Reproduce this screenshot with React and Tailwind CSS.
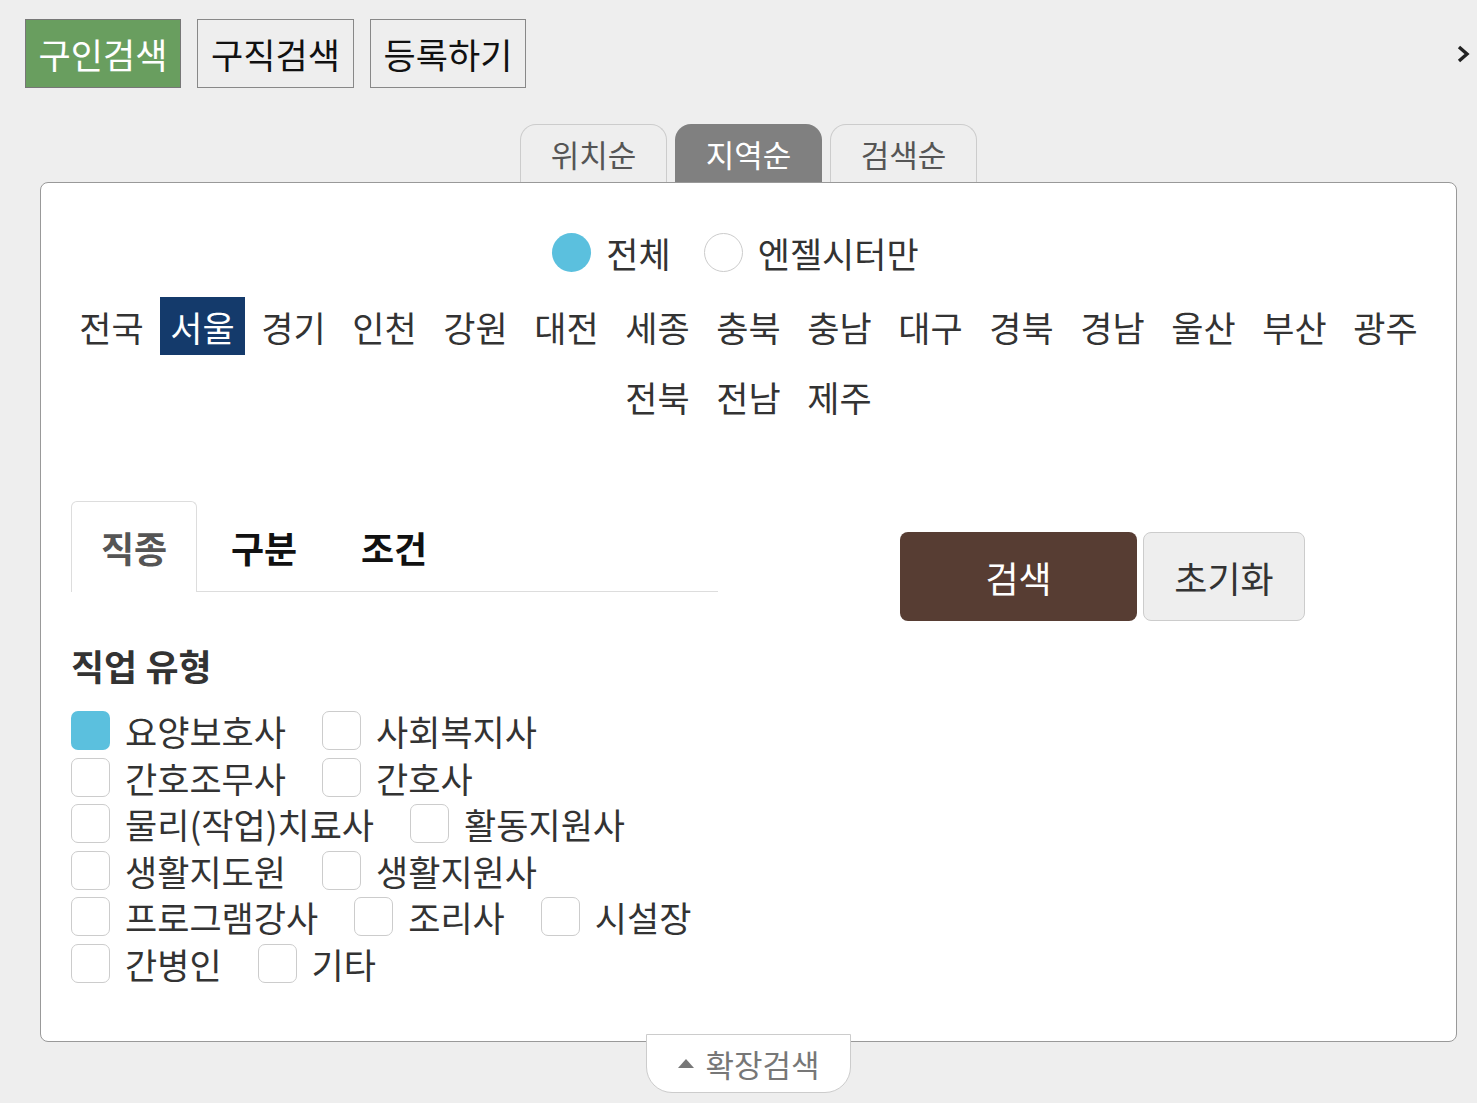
import React from "react";

const regions1 = ["전국","서울","경기","인천","강원","대전","세종","충북","충남","대구","경북","경남","울산","부산","광주"];
const regions2 = ["전북","전남","제주"];

const jobRows = [
  [["요양보호사", true], ["사회복지사", false]],
  [["간호조무사", false], ["간호사", false]],
  [["물리(작업)치료사", false], ["활동지원사", false]],
  [["생활지도원", false], ["생활지원사", false]],
  [["프로그램강사", false], ["조리사", false], ["시설장", false]],
  [["간병인", false], ["기타", false]],
];

function Region({ name }) {
  const sel = name === "서울";
  return (
    <div
      className={
        "w-[85px] h-[58px] flex items-center justify-center text-[35px] leading-none " +
        (sel ? "bg-[#143a6b] text-white" : "text-[#333]")
      }
    >
      {name}
    </div>
  );
}

function Check({ label, checked }) {
  return (
    <div className="flex items-center h-[39px]">
      <div
        className={
          "w-[39px] h-[39px] rounded-[7px] shrink-0 " +
          (checked ? "bg-[#5bc0de]" : "bg-white border border-[#cccccc]")
        }
      />
      <span className="ml-[15px] text-[35px] leading-none text-[#333] whitespace-nowrap">{label}</span>
    </div>
  );
}

export default function App() {
  return (
    <div className="w-full min-h-[1103px] bg-[#eeeeee] font-['Noto_Sans_CJK_KR','Noto_Sans',sans-serif]">
      {/* top buttons */}
      <div className="flex items-center pl-[25px] pt-[19px] pr-[6px]">
        <div className="flex gap-[16px]">
          <div className="w-[156px] h-[69px] flex items-center justify-center bg-[#699e5f] border border-[#777] text-white text-[35px] leading-none">구인검색</div>
          <div className="w-[157px] h-[69px] flex items-center justify-center border border-[#888] text-[#111] text-[35px] leading-none">구직검색</div>
          <div className="w-[156px] h-[69px] flex items-center justify-center border border-[#888] text-[#111] text-[35px] leading-none">등록하기</div>
        </div>
        <svg className="ml-auto" width="14" height="20" viewBox="0 0 14 20">
          <polyline points="2,3 10,10 2,17" fill="none" stroke="#222" strokeWidth="3.4" strokeLinejoin="miter" />
        </svg>
      </div>

      <div className="ml-[40px] mr-[20px] mt-[36px]">
        {/* sort tabs */}
        <div className="flex justify-center gap-[8px]">
          <div className="w-[147px] h-[58px] flex items-center justify-center rounded-t-[16px] border border-b-0 border-[#cccccc] bg-[#eeeeee] text-[#555] text-[31px] leading-none">위치순</div>
          <div className="w-[147px] h-[58px] flex items-center justify-center rounded-t-[16px] bg-[#808080] text-white text-[31px] leading-none">지역순</div>
          <div className="w-[147px] h-[58px] flex items-center justify-center rounded-t-[16px] border border-b-0 border-[#cccccc] bg-[#eeeeee] text-[#555] text-[31px] leading-none">검색순</div>
        </div>

        {/* panel */}
        <div className="bg-white border border-[#999999] rounded-[8px] pt-[50px] pb-[58px]">
          {/* radios */}
          <div className="flex justify-center gap-[33px] pr-[26px]">
            <div className="flex items-center">
              <div className="w-[39px] h-[39px] rounded-full bg-[#5bc0de]" />
              <span className="ml-[15px] text-[35px] leading-none text-[#333]">전체</span>
            </div>
            <div className="flex items-center">
              <div className="w-[39px] h-[39px] rounded-full bg-white border border-[#cccccc]" />
              <span className="ml-[15px] text-[35px] leading-none text-[#333]">엔젤시터만</span>
            </div>
          </div>

          {/* regions */}
          <div className="mt-[25px] flex flex-col items-center gap-y-[12px]">
            <div className="flex gap-x-[6px]">
              {regions1.map((r) => <Region key={r} name={r} />)}
            </div>
            <div className="flex gap-x-[6px]">
              {regions2.map((r) => <Region key={r} name={r} />)}
            </div>
          </div>

          {/* bottom section */}
          <div className="mt-[76px] px-[30px] flex items-start">
            <div className="w-[647px]">
              <div className="flex gap-[4px] border-b border-[#dddddd] h-[91px]">
                <div className="w-[126px] h-[91px] -mb-px flex items-center justify-center bg-white border border-b-0 border-[#dddddd] rounded-t-[6px] text-[36px] font-bold leading-none text-[#555]">직종</div>
                <div className="w-[126px] h-[91px] flex items-center justify-center text-[36px] font-bold leading-none text-[#111]">구분</div>
                <div className="w-[126px] h-[91px] flex items-center justify-center text-[36px] font-bold leading-none text-[#111]">조건</div>
              </div>
            </div>
            <div className="ml-[182px] mt-[31px] flex gap-[6px]">
              <div className="w-[237px] h-[89px] flex items-center justify-center bg-[#573d33] rounded-[8px] text-white text-[36px] leading-none">검색</div>
              <div className="w-[162px] h-[89px] flex items-center justify-center bg-[#eeeeee] border border-[#cccccc] rounded-[8px] text-[#333] text-[36px] leading-none">초기화</div>
            </div>
          </div>

          <div className="px-[30px] mt-[26px]">
            <div className="text-[36px] font-bold leading-none text-[#333]">직업 유형</div>
            <div className="mt-[28px] flex flex-col gap-y-[7.6px]">
              {jobRows.map((row, i) => (
                <div key={i} className="flex gap-x-[36px]">
                  {row.map(([l, c]) => <Check key={l} label={l} checked={c} />)}
                </div>
              ))}
            </div>
          </div>
        </div>

        {/* expand tab */}
        <div className="flex justify-center -mt-[8px] relative">
          <div className="w-[205px] h-[59px] flex items-center justify-center gap-[10px] bg-white border border-[#cccccc] rounded-b-[26px] text-[#777] text-[31px] leading-none">
            <svg width="18" height="11" viewBox="0 0 18 11"><polygon points="9,1 17,10 1,10" fill="#777" /></svg>
            <span>확장검색</span>
          </div>
        </div>
      </div>
    </div>
  );
}
